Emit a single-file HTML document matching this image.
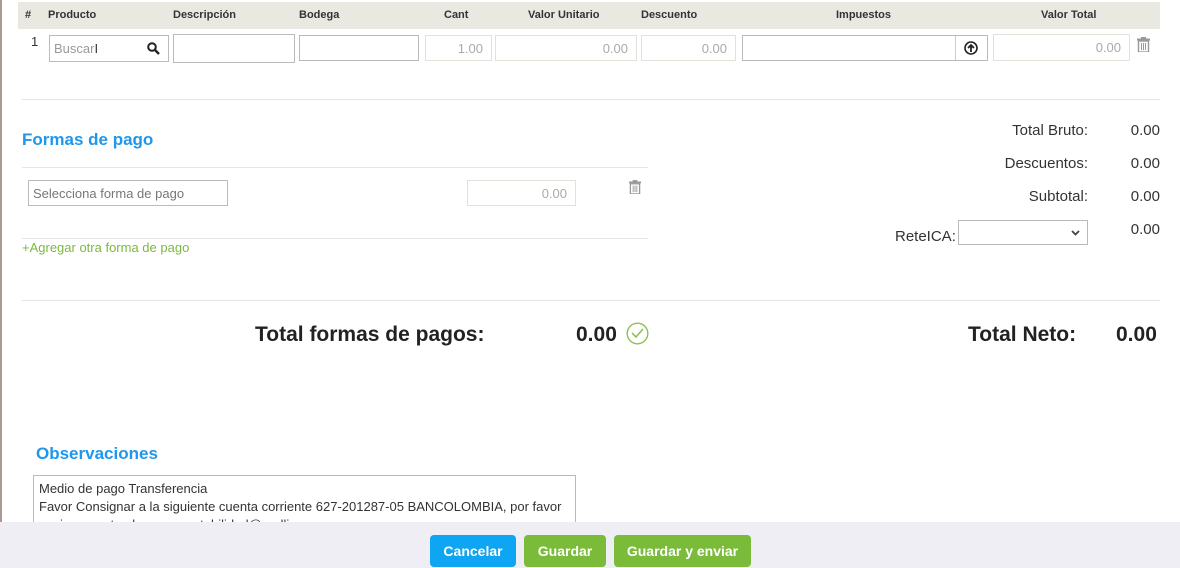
<!DOCTYPE html>
<html><head><meta charset="utf-8"><style>
*{box-sizing:border-box;margin:0;padding:0}
body{width:1180px;height:568px;overflow:hidden;background:#fff;font-family:"Liberation Sans",sans-serif;color:#333;position:relative}
.a{position:absolute}
.hd{left:18px;top:2px;width:1142px;height:27px;background:#e9e8e1}
.hd span{position:absolute;top:7px;font-size:11px;font-weight:bold;color:#333}
.in{position:absolute;border:1px solid #bbb;background:#fff;font-size:13px;color:#aaa;text-align:right;padding-right:8px;line-height:25px}
.lt{border-color:#e2e2da}
.ln{position:absolute;height:1px;background:#e6e6e6}
.blue{color:#1f97ec;font-weight:bold;font-size:17px}
.lab{position:absolute;font-size:15px;color:#333}
.btn{position:absolute;top:535px;height:32px;border-radius:4px;color:#fff;font-weight:bold;font-size:14px;text-align:center;line-height:32px}
</style></head><body>
<div class="a" style="left:0;top:0;width:2px;height:522px;background:#a89a90"></div>
<div class="a hd">
<span style="left:7px">#</span><span style="left:30px">Producto</span><span style="left:155px">Descripción</span><span style="left:281px">Bodega</span><span style="left:426px">Cant</span><span style="left:510px">Valor Unitario</span><span style="left:623px">Descuento</span><span style="left:818px">Impuestos</span><span style="left:1023px">Valor Total</span>
</div>
<div class="a" style="left:31px;top:34px;font-size:13px;color:#333">1</div>
<div class="in" style="left:49px;top:35px;width:120px;height:27px;text-align:left;padding-left:4px;color:#999">Buscar<span style="color:#333">I</span>
<svg class="a" style="left:97px;top:6px" width="13" height="13" viewBox="0 0 13 13"><circle cx="5" cy="5" r="3.8" fill="none" stroke="#222" stroke-width="2"/><path d="M8 8l4 4" stroke="#222" stroke-width="2.4"/></svg></div>
<div class="in" style="left:173px;top:34px;width:122px;height:29px"></div>
<div class="in" style="left:299px;top:35px;width:120px;height:26px"></div>
<div class="in lt" style="left:425px;top:35px;width:67px;height:26px">1.00</div>
<div class="in lt" style="left:495px;top:35px;width:142px;height:26px">0.00</div>
<div class="in lt" style="left:641px;top:35px;width:95px;height:26px">0.00</div>
<div class="in" style="left:742px;top:35px;width:246px;height:26px">
<div class="a" style="left:212px;top:0;width:1px;height:24px;background:#ccc"></div>
<svg class="a" style="left:221px;top:5px" width="14" height="14" viewBox="0 0 14 14"><circle cx="7" cy="7" r="6" fill="none" stroke="#222" stroke-width="1.6"/><path d="M7 11V4M4 7l3-3 3 3" fill="none" stroke="#222" stroke-width="1.8"/></svg></div>
<div class="in lt" style="left:993px;top:34px;width:137px;height:27px">0.00</div>
<svg class="a" style="left:1137px;top:37px" width="13" height="15" viewBox="0 0 13 15"><rect x="0" y="1.5" width="13" height="2" fill="#999"/><rect x="4" y="0" width="5" height="2" fill="#999"/><rect x="1.5" y="4" width="10" height="11" fill="none" stroke="#999" stroke-width="1.4"/><path d="M4.5 6v7M6.5 6v7M8.5 6v7" stroke="#999"/></svg>
<div class="ln" style="left:22px;top:99px;width:1138px"></div>
<div class="a blue" style="left:22px;top:130px">Formas de pago</div>
<div class="ln" style="left:22px;top:167px;width:626px"></div>
<div class="in" style="left:28px;top:180px;width:200px;height:26px;text-align:left;padding-left:4px;color:#777">Selecciona forma de pago</div>
<div class="in lt" style="left:467px;top:180px;width:109px;height:26px">0.00</div>
<svg class="a" style="left:629px;top:180px" width="12" height="14" viewBox="0 0 13 15"><rect x="0" y="1.5" width="13" height="2" fill="#999"/><rect x="4" y="0" width="5" height="2" fill="#999"/><rect x="1.5" y="4" width="10" height="11" fill="none" stroke="#999" stroke-width="1.4"/><path d="M4.5 6v7M6.5 6v7M8.5 6v7" stroke="#999"/></svg>
<div class="ln" style="left:22px;top:238px;width:626px"></div>
<div class="a" style="left:22px;top:240px;font-size:13px;color:#7cb83e">+Agregar otra forma de pago</div>
<div class="lab" style="right:92px;top:122px">Total Bruto:</div><div class="lab" style="right:20px;top:122px">0.00</div>
<div class="lab" style="right:92px;top:155px">Descuentos:</div><div class="lab" style="right:20px;top:155px">0.00</div>
<div class="lab" style="right:92px;top:188px">Subtotal:</div><div class="lab" style="right:20px;top:188px">0.00</div>
<div class="lab" style="left:895px;top:228px">ReteICA:</div><div class="lab" style="right:20px;top:221px">0.00</div>
<div class="in" style="left:958px;top:220px;width:130px;height:25px">
<svg class="a" style="left:112px;top:9px" width="9" height="6" viewBox="0 0 9 6"><path d="M1 1l3.5 3.5L8 1" fill="none" stroke="#444" stroke-width="1.8"/></svg></div>
<div class="ln" style="left:22px;top:300px;width:1138px"></div>
<div class="a" style="left:255px;top:323px;font-size:21px;font-weight:bold;color:#222">Total formas de pagos:</div>
<div class="a" style="left:576px;top:323px;font-size:21px;font-weight:bold;color:#222">0.00</div>
<svg class="a" style="left:626px;top:322px" width="23" height="23" viewBox="0 0 23 23"><circle cx="11.5" cy="11.5" r="10.3" fill="none" stroke="#8cc152" stroke-width="1.4"/><path d="M6 11l4 4 7-8" fill="none" stroke="#8cc152" stroke-width="1.6"/></svg>
<div class="a" style="left:968px;top:323px;font-size:21px;font-weight:bold;color:#222">Total Neto:</div>
<div class="a" style="left:1116px;top:323px;font-size:21px;font-weight:bold;color:#222">0.00</div>
<div class="a blue" style="left:36px;top:444px">Observaciones</div>
<div class="a" style="left:33px;top:475px;width:543px;height:60px;border:1px solid #bbb;padding:4px 5px;font-size:13px;line-height:18px;color:#333;overflow:hidden">Medio de pago Transferencia<br>Favor Consignar a la siguiente cuenta corriente 627-201287-05 BANCOLOMBIA, por favor<br>enviar soporte al correo contabilidad@aadlisa.com</div>
<div class="a" style="left:0;top:522px;width:1180px;height:46px;background:#eeeef4"></div>
<div class="btn" style="left:430px;width:86px;background:#0ea5f2">Cancelar</div>
<div class="btn" style="left:524px;width:82px;background:#7bbb3a">Guardar</div>
<div class="btn" style="left:614px;width:137px;background:#7bbb3a">Guardar y enviar</div>
</body></html>
